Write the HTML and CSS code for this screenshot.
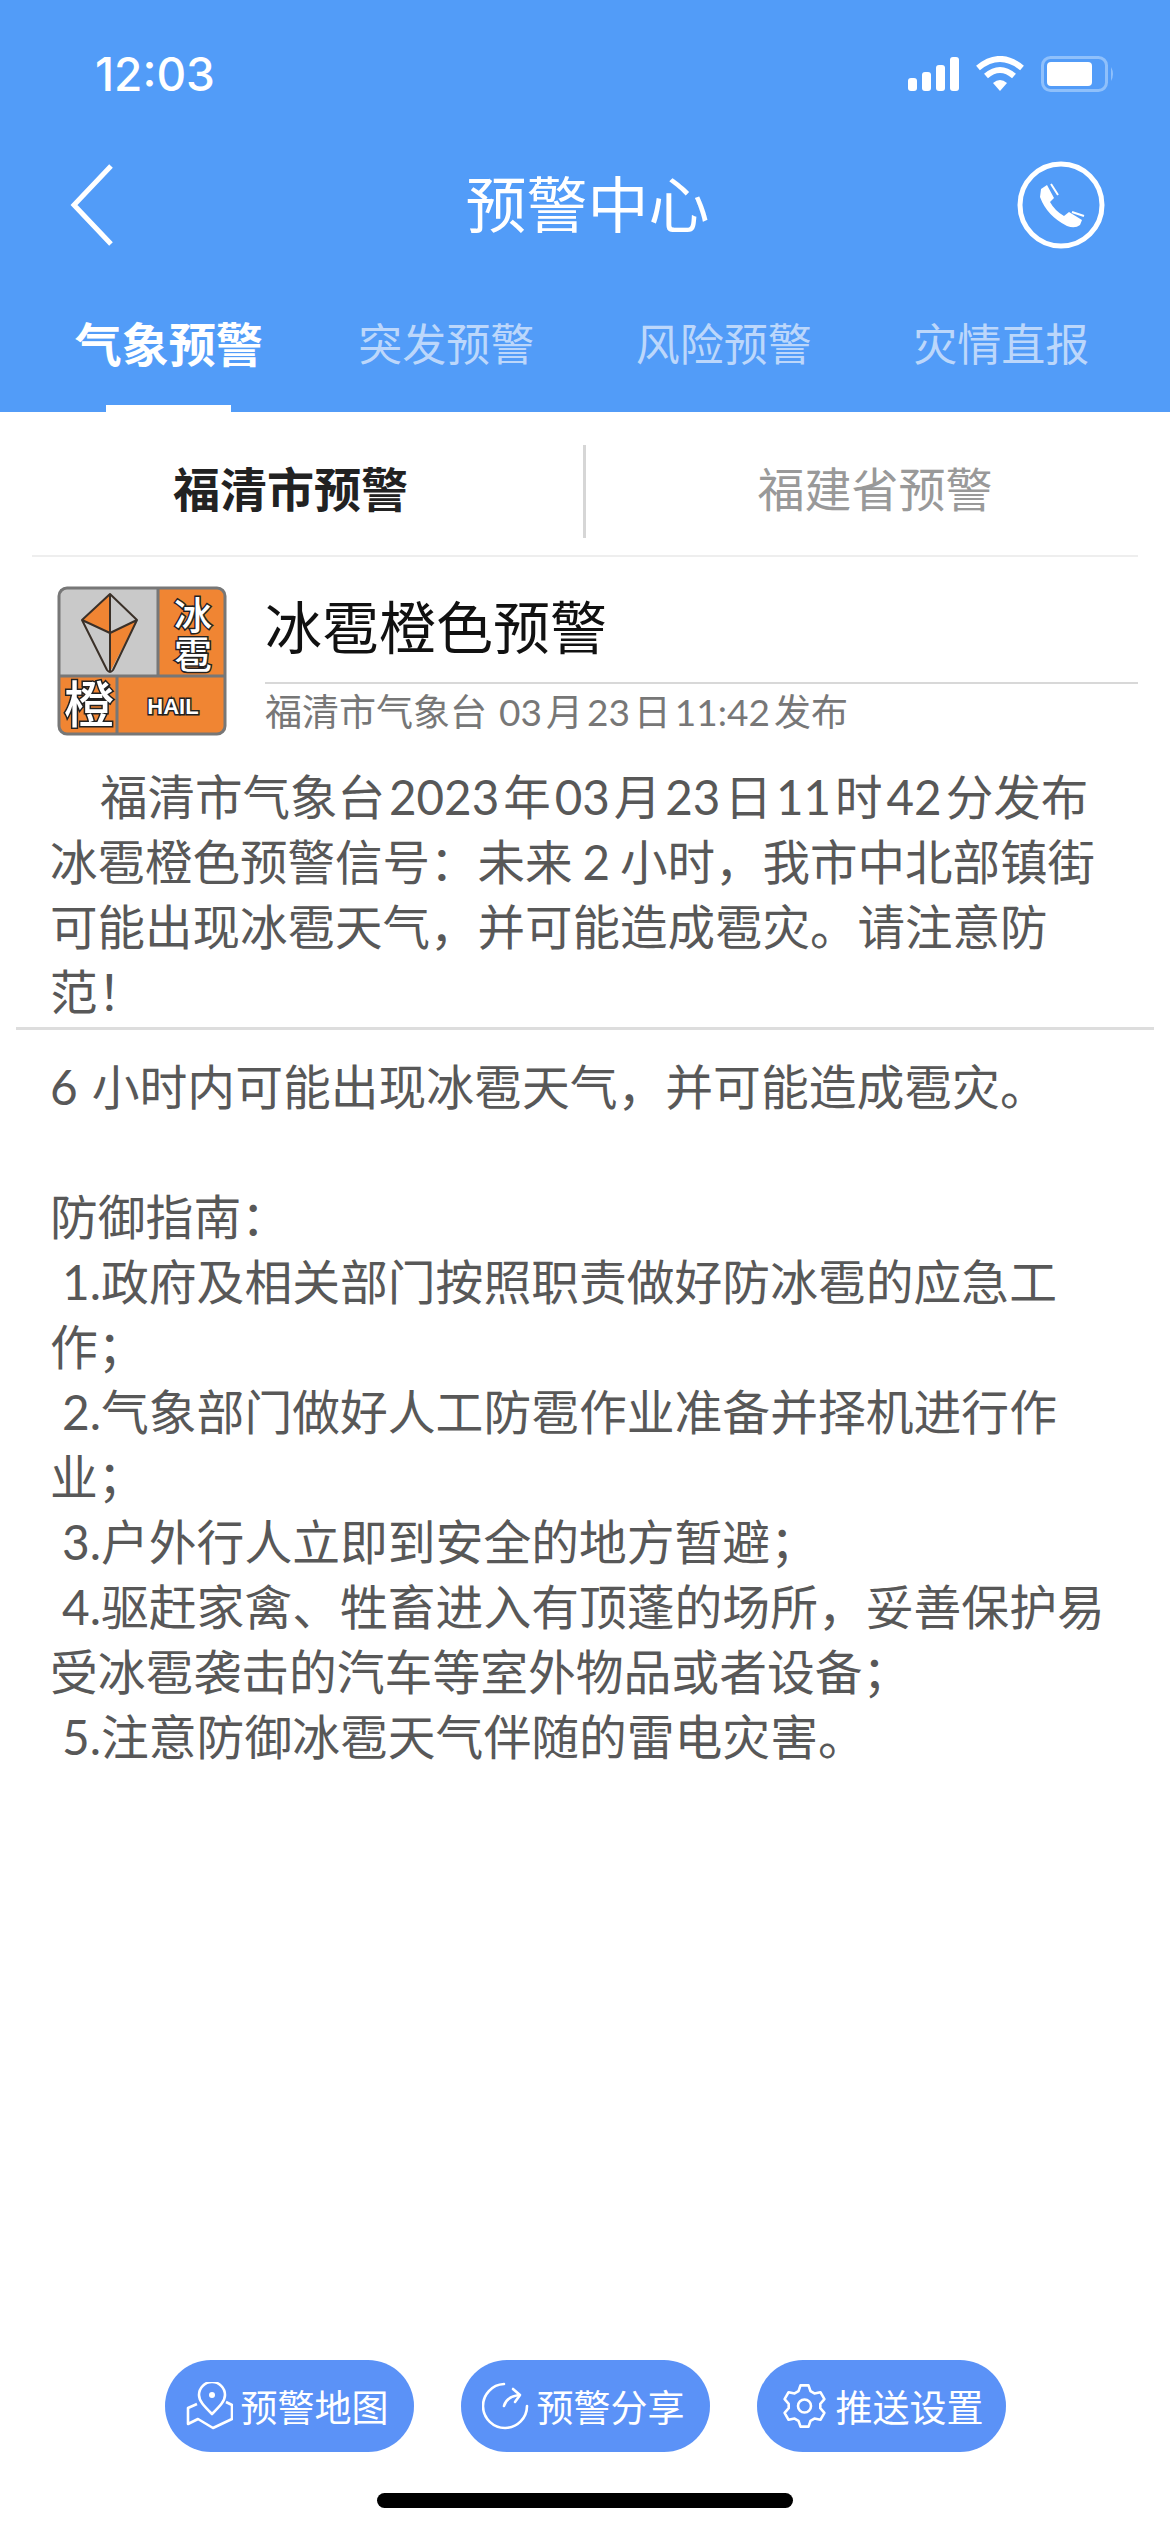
FILE: index.html
```html
<!DOCTYPE html>
<html lang="zh-CN">
<head>
  <meta charset="UTF-8">
  <title>预警中心</title>
  <link rel="stylesheet" href="styles.css">
</head>
<body>
  <div class="page">
    <header class="header">
      <div class="status-bar">
        <span class="time">12:03</span>
        <div class="status-icons">
          <svg class="signal" width="51" height="34" viewBox="0 0 51 34" fill="#fff">
            <rect x="0" y="21" width="9" height="13" rx="3"/>
            <rect x="14" y="15" width="9" height="19" rx="3"/>
            <rect x="28" y="8" width="9" height="26" rx="3"/>
            <rect x="42" y="0" width="9" height="34" rx="3"/>
          </svg>
          <svg class="wifi" width="48" height="36" viewBox="0 0 48 36" fill="none" stroke="#fff" stroke-width="6">
            <path d="M2 12 Q24 -6 46 12"/>
            <path d="M10 20 Q24 8 38 20"/>
            <path d="M17 27 L24 35 L31 27 Q24 21 17 27 Z" fill="#fff" stroke="none"/>
          </svg>
          <svg class="battery" width="74" height="36" viewBox="0 0 74 36">
            <rect x="1.5" y="1.5" width="64" height="33" rx="8" fill="none" stroke="#8fc0fb" stroke-width="3"/>
            <rect x="6" y="6" width="45" height="24" rx="4" fill="#fff"/>
            <path d="M70 11 Q74 18 70 25 Z" fill="#8fc0fb"/>
          </svg>
        </div>
      </div>
      <div class="nav">
        <svg class="back" width="44" height="84" viewBox="0 0 44 84" fill="none" stroke="#fff" stroke-width="5">
          <path d="M41 3 L4 42 L41 81"/>
        </svg>
        <h1 class="nav-title">预警中心</h1>
        <svg class="phone" width="88" height="88" viewBox="0 0 88 88" fill="none" stroke="#fff">
          <circle cx="44" cy="44" r="41" stroke-width="5"/>
          <path d="M24 28 L30 24 L37 37 L33 41 Q38 50 47 55 L52 51 L65 59 L63 64 Q58 68 50 65 Q30 55 23 36 Z" fill="#fff" stroke="none"/>
          <path d="M34 23 L41 34 M55 51 L67 55" stroke-width="2"/>
        </svg>
      </div>
      <nav class="tabs">
        <div class="tab tab-active"><span>气象预警</span><i></i></div>
        <div class="tab"><span>突发预警</span><i></i></div>
        <div class="tab"><span>风险预警</span><i></i></div>
        <div class="tab"><span>灾情直报</span><i></i></div>
      </nav>
    </header>

    <div class="region-tabs">
      <div class="region region-active">福清市预警</div>
      <div class="region-divider"></div>
      <div class="region region-other">福建省预警</div>
    </div>

    <section class="alert-head">
      <svg class="badge" width="170" height="150" viewBox="0 0 170 150">
        <rect x="2" y="2" width="166" height="146" rx="8" fill="#f08533"/>
        <rect x="3" y="3" width="98" height="87" fill="#c9c9c9"/>
        <path d="M25 34 L53 8 L53 47 Z M53 47 L80 34 L53 86 Z" fill="#f08533"/>
        <path d="M53 8 L80 34 L53 47 L25 34 Z M25 34 L50 84 Q53 88 56 84 L80 34 M53 8 L53 86" fill="none" stroke="#3a3028" stroke-width="2" stroke-linejoin="round"/>
        <path d="M101 2 V90 M2 90 H168 M60 90 V148" stroke="#777" stroke-width="3"/>
        <rect x="2" y="2" width="166" height="146" rx="8" fill="none" stroke="#777" stroke-width="3"/>
        <text class="badge-text" x="136" y="43" font-size="38">冰</text>
        <text class="badge-text" x="136" y="82" font-size="38">雹</text>
        <text class="badge-text" x="32" y="137" font-size="50">橙</text>
        <text class="badge-text badge-latin" x="116" y="128" font-size="22">HAIL</text>
      </svg>
      <div class="alert-info">
        <h2 class="alert-title">冰雹橙色预警</h2>
        <p class="alert-meta">福清市气象台<i class="gap"></i><i class="gap"></i><i class="gap"></i>03<i class="gap"></i>月<i class="gap"></i>23<i class="gap"></i>日<i class="gap"></i>11:42<i class="gap"></i>发布</p>
      </div>
    </section>

    <p class="alert-summary"><span class="indent"></span>福清市气象台<i class="gap"></i>2023<i class="gap"></i>年<i class="gap"></i>03<i class="gap"></i>月<i class="gap"></i>23<i class="gap"></i>日<i class="gap"></i>11<i class="gap"></i>时<i class="gap"></i>42<i class="gap"></i>分发布冰雹橙色预警信号：未来<i class="gap-w"></i>2<i class="gap-w"></i>小时，我市中北部镇街可能出现冰雹天气，并可能造成雹灾。请注意防范！</p>

    <div class="alert-rule"></div>

    <div class="alert-body">
      <p>6<i class="gap-w"></i><i class="gap"></i>小时内可能出现冰雹天气，并可能造成雹灾。</p>
      <p>&nbsp;</p>
      <p>防御指南：</p>
      <p><i class="lead"></i>1.政府及相关部门按照职责做好防冰雹的应急工作；</p>
      <p><i class="lead"></i>2.气象部门做好人工防雹作业准备并择机进行作业；</p>
      <p><i class="lead"></i>3.户外行人立即到安全的地方暂避；</p>
      <p><i class="lead"></i>4.驱赶家禽、牲畜进入有顶蓬的场所，妥善保护易受冰雹袭击的汽车等室外物品或者设备；</p>
      <p><i class="lead"></i>5.注意防御冰雹天气伴随的雷电灾害。</p>
    </div>

    <footer class="footer">
      <div class="actions">
        <a class="action">
          <svg width="47" height="48" viewBox="0 0 47 48" fill="none" stroke="#fff" stroke-width="2.6" stroke-linejoin="round">
            <path d="M26 32 C18 24 13 19 13 13 A13 13 0 0 1 39 13 C39 19 34 24 26 32 Z"/>
            <circle cx="26" cy="13" r="3" fill="#fff" stroke="none"/>
            <path d="M11 22 L2 26 V42 L12 37 L27 46 L46 37 V23 L40 20"/>
          </svg>
          <span>预警地图</span>
        </a>
        <a class="action">
          <svg width="47" height="48" viewBox="0 0 47 48" fill="none" stroke="#fff" stroke-width="2.6" stroke-linecap="round" stroke-linejoin="round">
            <path d="M22 2 A22 22 0 1 0 45 24"/>
            <path d="M22 24 Q24 15 37 13"/>
            <path d="M31 7 L38 13 L33 20"/>
          </svg>
          <span>预警分享</span>
        </a>
        <a class="action action-settings">
          <svg width="45" height="46" viewBox="-2 -1 45 46" fill="none" stroke="#fff" stroke-width="2.6" stroke-linejoin="round">
            <path d="M14.5 7.2 L16.5 1.4 H24.5 L26.5 7.2 L30.4 9.4 L36.4 8.2 L40.4 15.2 L36.3 19.8 V24.2 L40.4 28.8 L36.4 35.8 L30.4 34.6 L26.5 36.8 L24.5 42.6 H16.5 L14.5 36.8 L10.6 34.6 L4.6 35.8 L0.6 28.8 L4.7 24.2 V19.8 L0.6 15.2 L4.6 8.2 L10.6 9.4 Z"/>
            <circle cx="20.5" cy="22" r="6.5"/>
          </svg>
          <span>推送设置</span>
        </a>
      </div>
      <div class="home-bar"></div>
    </footer>
  </div>
</body>
</html>
```

FILE: styles.css
```css
* {
  box-sizing: border-box;
}
body {
  margin: 0;
  background: #ffffff;
  font-family: "Noto Sans CJK SC", "Liberation Sans", sans-serif;
  color: #585858;
}
h1, h2, p {
  margin: 0;
  font-weight: 400;
}
i {
  font-style: normal;
}
.page {
  width: 1170px;
  height: 2532px;
  display: flex;
  flex-direction: column;
  overflow: hidden;
}

/* blue header */
.header {
  background: #529cf8;
  color: #fff;
  height: 412px;
  padding-top: 44px;
}
.status-bar {
  height: 58px;
  padding: 2px 55px 0 95px;
  display: flex;
  justify-content: space-between;
  align-items: center;
}
.time {
  font-family: Inter, sans-serif;
  font-size: 46px;
  font-weight: 500;
}
.status-icons {
  display: flex;
  align-items: center;
  gap: 17px;
}
.nav {
  margin-top: 53px;
  height: 100px;
  padding: 0 65px 0 70px;
  display: grid;
  grid-template-columns: 1fr auto 1fr;
  align-items: center;
}
.nav-title {
  font-size: 61px;
  line-height: 90px;
  padding-bottom: 6px;
}
.phone {
  justify-self: end;
}
.tabs {
  margin-top: 45px;
  padding: 0 30px;
  display: flex;
}
.tab {
  flex: 1;
  height: 112px;
  display: flex;
  flex-direction: column;
  align-items: center;
  justify-content: space-between;
  font-size: 44px;
  line-height: 84px;
  color: #bcd7fb;
}
.tab i {
  width: 125px;
  height: 7px;
}
.tab-active {
  color: #fff;
  font-size: 47px;
  font-weight: 700;
}
.tab-active i {
  background: #fff;
}

/* city / province switch */
.region-tabs {
  margin: 0 32px;
  height: 145px;
  padding-top: 16px;
  display: flex;
  align-items: center;
  border-bottom: 2px solid #eeeeee;
}
.region {
  flex: 1;
  text-align: center;
  font-size: 47px;
  color: #999;
  padding-bottom: 10px;
}
.region-active {
  flex: none;
  width: 551px;
  color: #222;
  font-weight: 700;
  padding-right: 34px;
}
.region-other {
  padding-left: 26px;
}
.region-divider {
  width: 3px;
  height: 93px;
  background: #d6d6d6;
}

/* alert heading */
.alert-head {
  padding: 29px 32px 0 57px;
  display: flex;
  gap: 38px;
}
.badge-text {
  font-family: "Noto Sans CJK SC", sans-serif;
  font-weight: 500;
  text-anchor: middle;
  fill: #fff;
  stroke: #222;
  stroke-width: 3px;
  paint-order: stroke;
}
.badge-latin {
  font-family: "Liberation Sans", sans-serif;
  font-weight: 700;
}
.alert-info {
  flex: 1;
}
.alert-title {
  height: 98px;
  font-size: 57px;
  line-height: 76px;
  color: #111;
  border-bottom: 2px solid #d8d8d8;
}
.alert-meta {
  margin-top: 3px;
  font-family: Lato, "Noto Sans CJK SC", sans-serif;
  font-size: 37px;
  line-height: 50px;
  color: #777;
}

/* alert text */
.gap {
  display: inline-block;
  width: 4px;
}
.gap-w {
  display: inline-block;
  width: 10px;
}
.indent {
  display: inline-block;
  width: 50px;
}
.lead {
  display: inline-block;
  width: 12px;
}
.alert-summary {
  margin-top: 27px;
  padding: 0 50px;
  font-family: Lato, "Noto Sans CJK SC", sans-serif;
  font-size: 47.5px;
  line-height: 65px;
}
.alert-rule {
  margin: 3px 16px 0;
  height: 3px;
  background: #dddddd;
}
.alert-body {
  margin-top: 24px;
  padding: 0 50px;
  font-family: Lato, "Noto Sans CJK SC", sans-serif;
  font-size: 47.8px;
  line-height: 65px;
}

/* bottom buttons */
.footer {
  margin-top: auto;
  padding-bottom: 24px;
  display: flex;
  flex-direction: column;
  align-items: center;
}
.actions {
  display: flex;
  gap: 47px;
}
.action {
  width: 249px;
  height: 92px;
  padding-left: 21px;
  border-radius: 46px;
  background: #5b92f7;
  color: #fff;
  font-size: 37px;
  display: flex;
  align-items: center;
  gap: 8px;
}
.action-settings {
  padding-left: 25px;
  gap: 9px;
}
.home-bar {
  margin-top: 41px;
  width: 416px;
  height: 15px;
  border-radius: 8px;
  background: #000;
}
```
